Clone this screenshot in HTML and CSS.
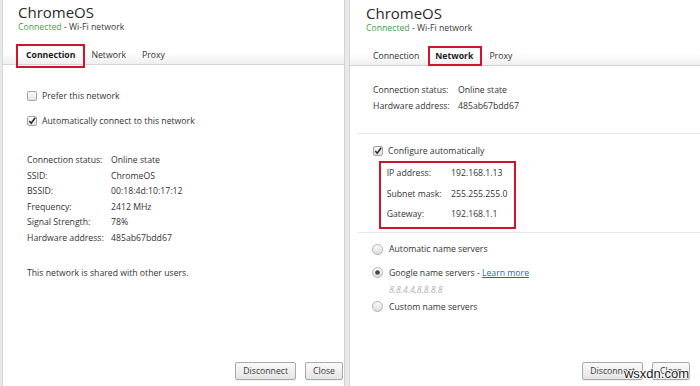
FILE: index.html
```html
<!DOCTYPE html>
<html lang="en">
<head>
    <meta charset="UTF-8">
    <meta name="viewport" content="width=device-width, initial-scale=1.0">
    <title>ChromeOS network settings</title>
    <link rel="stylesheet" href="styles.css">
</head>
<body>
    <!-- left dialog: Connection tab -->
    <div class="panel panel-a">
        <div class="head">
            <div class="title">ChromeOS</div>
            <div class="sub"><span class="ok">Connected</span> - Wi-Fi network</div>
        </div>
        <div class="tabs">
            <div class="tab active mark-a">Connection</div>
            <div class="tab">Network</div>
            <div class="tab">Proxy</div>
        </div>
        <div class="body">
            <div class="check-row">
                <svg class="box" width="10" height="10" viewBox="0 0 10 10"><defs><linearGradient id="cb1" x1="0" y1="0" x2="0" y2="1"><stop offset="0" stop-color="#fdfdfd"/><stop offset="1" stop-color="#e2e2e2"/></linearGradient></defs><rect x="0.5" y="0.5" width="9" height="9" rx="1.5" fill="url(#cb1)" stroke="#a3a3a3"/></svg>
                <span>Prefer this network</span>
            </div>
            <div class="check-row">
                <svg class="box" width="10" height="10" viewBox="0 0 10 10"><rect x="0.5" y="0.5" width="9" height="9" rx="1.5" fill="url(#cb1)" stroke="#a3a3a3"/><path d="M2.3 5.1 L4.2 7.3 L8.2 1.8" fill="none" stroke="#2e2e2e" stroke-width="1.6"/></svg>
                <span>Automatically connect to this network</span>
            </div>
            <div class="info info-a">
                <span>Connection status:</span><span>Online state</span>
                <span>SSID:</span><span>ChromeOS</span>
                <span>BSSID:</span><span>00:18:4d:10:17:12</span>
                <span>Frequency:</span><span>2412 MHz</span>
                <span>Signal Strength:</span><span>78%</span>
                <span>Hardware address:</span><span>485ab67bdd67</span>
            </div>
            <p class="note">This network is shared with other users.</p>
        </div>
        <div class="foot foot-a">
            <button class="btn">Disconnect</button>
            <button class="btn">Close</button>
        </div>
    </div>

    <!-- right dialog: Network tab -->
    <div class="panel panel-b">
        <div class="head">
            <div class="title">ChromeOS</div>
            <div class="sub"><span class="ok">Connected</span> - Wi-Fi network</div>
        </div>
        <div class="tabs">
            <div class="tab">Connection</div>
            <div class="tab active mark-b">Network</div>
            <div class="tab">Proxy</div>
        </div>
        <div class="body">
            <div class="info info-b">
                <span>Connection status:</span><span>Online state</span>
                <span>Hardware address:</span><span>485ab67bdd67</span>
            </div>
            <div class="rule rule-top"></div>
            <div class="check-row config">
                <svg class="box" width="10" height="10" viewBox="0 0 10 10"><rect x="0.5" y="0.5" width="9" height="9" rx="1.5" fill="url(#cb1)" stroke="#a3a3a3"/><path d="M2.3 5.1 L4.2 7.3 L8.2 1.8" fill="none" stroke="#2e2e2e" stroke-width="1.6"/></svg>
                <span>Configure automatically</span>
            </div>
            <div class="ip-box">
                <span>IP address:</span><span>192.168.1.13</span>
                <span>Subnet mask:</span><span>255.255.255.0</span>
                <span>Gateway:</span><span>192.168.1.1</span>
            </div>
            <div class="rule rule-mid"></div>
            <div class="radio-row first">
                <svg class="radio" width="11" height="11" viewBox="0 0 11 11"><defs><linearGradient id="rb1" x1="0" y1="0" x2="0" y2="1"><stop offset="0" stop-color="#fdfdfd"/><stop offset="1" stop-color="#dcdcdc"/></linearGradient></defs><circle cx="5.5" cy="5.5" r="5" fill="url(#rb1)" stroke="#b0b0b0"/></svg>
                <span>Automatic name servers</span>
            </div>
            <div class="radio-row">
                <svg class="radio" width="11" height="11" viewBox="0 0 11 11"><circle cx="5.5" cy="5.5" r="5" fill="url(#rb1)" stroke="#b0b0b0"/><circle cx="5.5" cy="5.5" r="2.3" fill="#444"/></svg>
                <span>Google name servers - <a class="link" href="#">Learn more</a></span>
            </div>
            <div class="dns">8.8.4.4,8.8.8.8</div>
            <div class="radio-row">
                <svg class="radio" width="11" height="11" viewBox="0 0 11 11"><circle cx="5.5" cy="5.5" r="5" fill="url(#rb1)" stroke="#b0b0b0"/></svg>
                <span>Custom name servers</span>
            </div>
        </div>
        <div class="foot foot-b">
            <button class="btn">Disconnect</button>
            <button class="btn">Close</button>
        </div>
    </div>

    <div class="watermark">wsxdn.com</div>
</body>
</html>
```

FILE: styles.css
```css
* { margin: 0; padding: 0; box-sizing: border-box; }
body {
    font-family: 'Open Sans', 'Noto Sans', sans-serif;
    font-size: 8.7px;
    color: #333;
    background: #e9e9e9;
    width: 700px;
    height: 386px;
    overflow: hidden;
    display: flex;
    gap: 4px;
    padding-left: 2px;
    position: relative;
}
.panel {
    background: #fff;
    height: 386px;
    display: flex;
    flex-direction: column;
}
.panel-a {
    width: 343px;
    border-left: 1px solid #d8d8d8;
    border-right: 1px solid #d2d2d2;
    padding-top: 2.5px;
}
.panel-b {
    width: 351px;
    border-left: 1px solid #d6d6d6;
    padding-top: 3.5px;
}
.head {
    padding-left: 15px;
}
.panel-b .head {
    padding-left: 16px;
}
.title {
    font-size: 15px;
    line-height: 18px;
    color: #2a2a2a;
}
.sub {
    line-height: 12px;
    color: #3a3a3a;
}
.ok {
    color: #3f9f48;
}
.tabs {
    display: flex;
    margin-top: 13.5px;
    padding-left: 15px;
    background: linear-gradient(to bottom, #fff 35%, #efefef);
    border-bottom: 1px solid #d4d4d4;
}
.tab {
    padding: 0 8px;
    line-height: 18px;
    color: #333;
    position: relative;
}
.tab.active {
    font-weight: 700;
    color: #222;
}
.mark-a::after, .mark-b::after {
    content: "";
    position: absolute;
    border: 2px solid #d0142c;
}
.mark-a::after {
    left: -2px; right: -2px; top: -2px; bottom: -4px;
}
.mark-b::after {
    left: 1px; right: -1px; top: -1px; bottom: -1px;
}
.body {
    display: flex;
    flex-direction: column;
}
.panel-a .body {
    padding: 18px 0 0 24px;
}
.panel-b .body {
    padding: 16px 0 0 23px;
}
.check-row {
    display: flex;
    align-items: center;
    height: 25px;
}
.check-row .box {
    margin-right: 5px;
}
.info {
    display: grid;
}
.info-a {
    grid-template-columns: 84px auto;
    line-height: 15.5px;
    margin-top: 20px;
}
.info-b {
    grid-template-columns: 85px auto;
    line-height: 16px;
}
.note {
    line-height: 15.5px;
    margin-top: 20.4px;
}
.rule {
    height: 1px;
    background: #e6e6e6;
    margin-left: -15px;
}
.rule-top {
    margin-top: 18.8px;
}
.check-row.config {
    height: 20px;
    margin-top: 7px;
}
.ip-box {
    display: grid;
    grid-template-columns: 64.3px auto;
    line-height: 20.3px;
    width: 137px;
    margin: 0.7px 0 0 6.3px;
    padding: 0 0 2.5px 5.4px;
    border: 2px solid #d0142c;
}
.rule-mid {
    margin-top: 3.4px;
}
.radio-row {
    display: flex;
    align-items: center;
    line-height: 20px;
    margin-top: 3.4px;
}
.radio-row.first {
    margin-top: 6.2px;
}
.radio-row .radio {
    margin: 0 6px 0 -1px;
}
.dns {
    line-height: 14px;
    padding-left: 16px;
    font-style: italic;
    color: #b4b4b4;
}
.dns + .radio-row {
    margin-top: 0;
}
.link {
    color: #2f5fc4;
    text-decoration: underline;
}
.foot {
    margin-top: auto;
    display: flex;
    justify-content: flex-end;
    gap: 9px;
    padding-bottom: 6px;
}
.foot-a {
    padding-right: 1px;
}
.foot-b {
    padding-right: 10px;
}
.btn {
    font-family: inherit;
    font-size: 8.7px;
    color: #3a3a3a;
    height: 18px;
    padding: 0 7px;
    border: 1px solid #a9a9a9;
    border-radius: 2px;
    background: linear-gradient(to bottom, #fafafa, #e4e4e4);
    box-shadow: 0 1px 0 rgba(0, 0, 0, 0.05);
}
.watermark {
    position: absolute;
    right: 11px;
    bottom: 5px;
    font-family: 'Liberation Sans', sans-serif;
    font-size: 13px;
    color: #1a1a1a;
    text-shadow: 1px 0 0 #fff, -1px 0 0 #fff, 0 1px 0 #fff, 0 -1px 0 #fff;
}
```
